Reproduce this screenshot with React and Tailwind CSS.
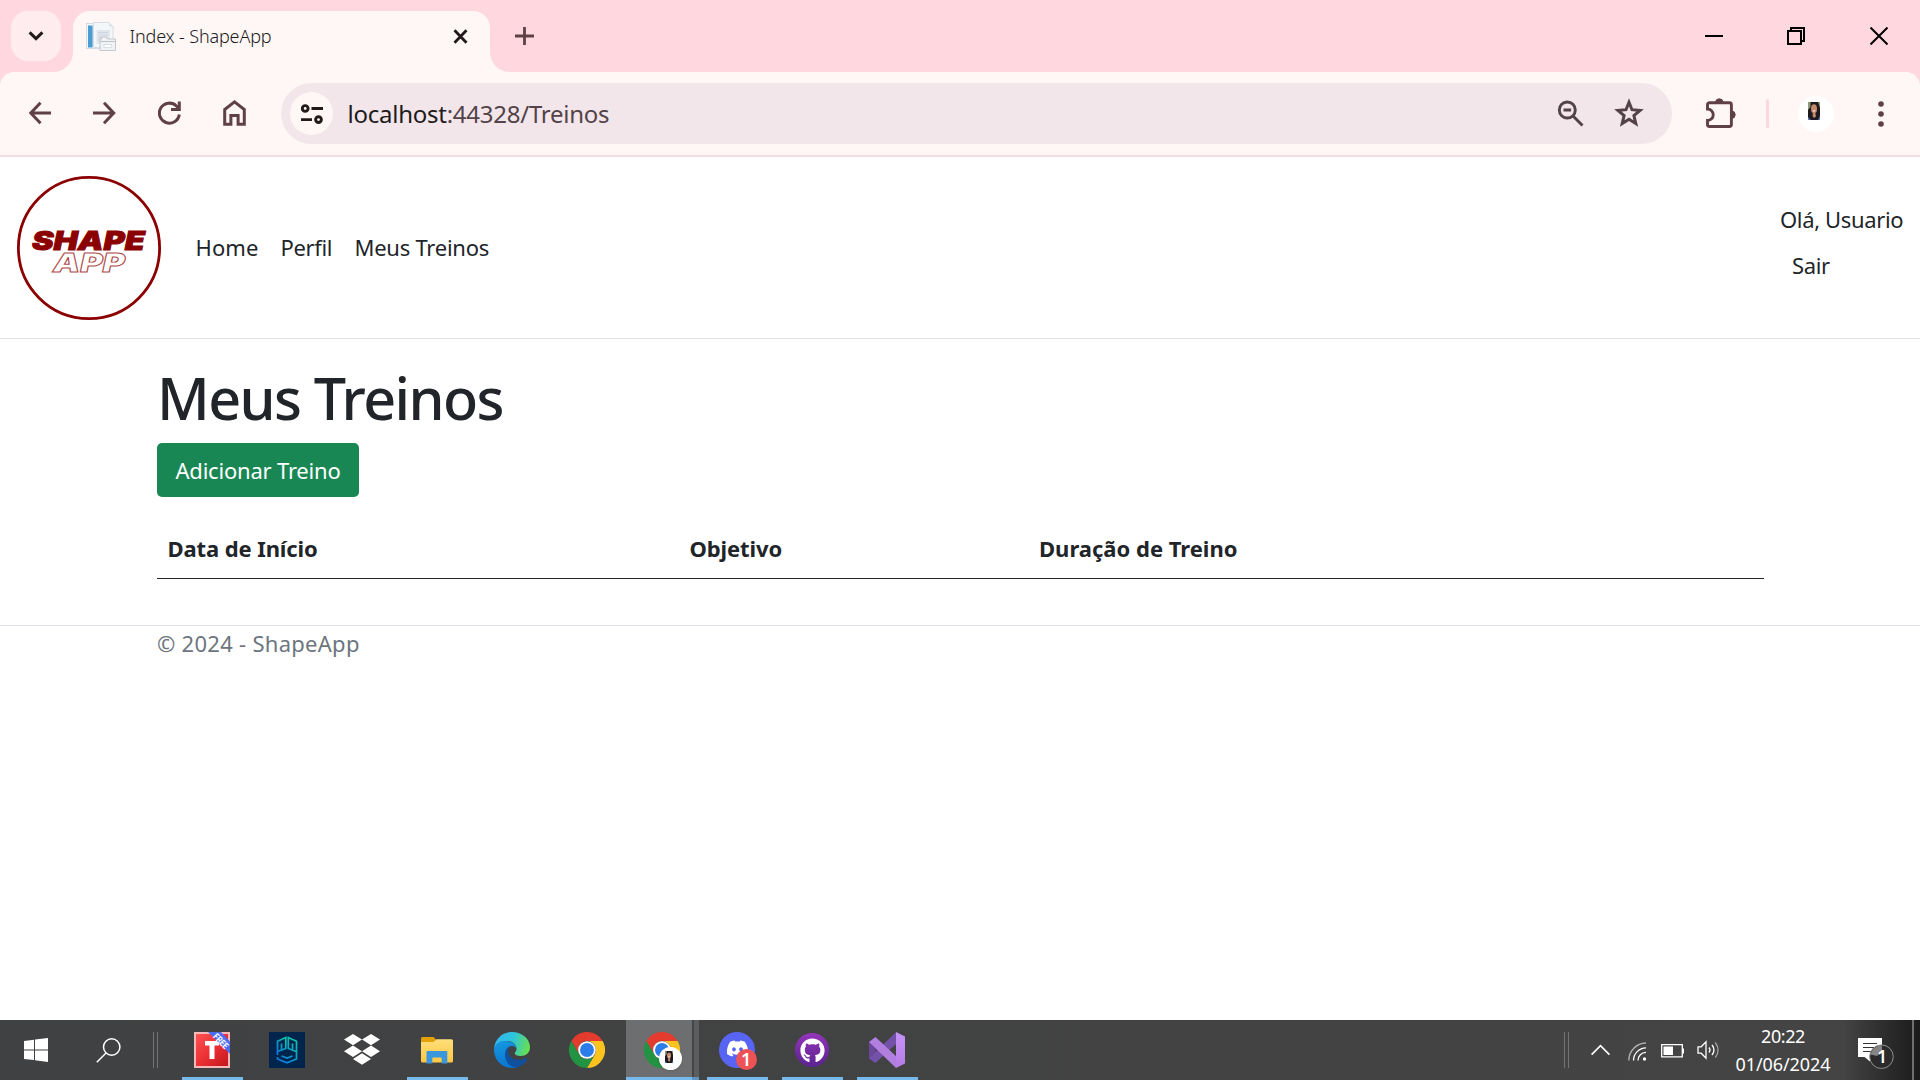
import React from "react";
import { FaGithub, FaDiscord } from "react-icons/fa";

/* ---------- browser chrome ---------- */

function Favicon() {
  return (
    <svg width="30" height="29" viewBox="0 0 30 29">
      <rect x="0.5" y="1.5" width="18" height="25" fill="#f2f6fa" stroke="#cdd5dc" strokeWidth="0.8" />
      <rect x="2" y="3.5" width="4.6" height="22" fill="#4a9cd3" />
      <path d="M7.5 0.5h15.5l4 4v21h-19.5z" fill="#f4f7fa" stroke="#cfd6dc" strokeWidth="0.8" />
      <path d="M23 0.5l0 4h4z" fill="#dbe2e8" />
      <rect x="10.5" y="8" width="13.5" height="14" fill="#e1e7ed" />
      <path d="M12 10.5h10M12 13h10M12 15.5h6M12 18h4" stroke="#c6d0da" strokeWidth="0.8" />
      <path d="M14 28.5v-11.5h1.5v-2h5l1 2h8v11.5z" fill="#f0f2f4" stroke="#bcc2c9" strokeWidth="0.9" />
      <path d="M14.5 19.5h15" stroke="#bcc2c9" strokeWidth="1" />
      <rect x="18" y="22.5" width="7.5" height="3" fill="#fff" stroke="#cfd5da" strokeWidth="0.7" />
    </svg>
  );
}

function TabStrip() {
  return (
    <div className="flex h-[72px] bg-[#ffd8df]">
      <div className="ml-[11px] mt-[11px] flex h-[50px] w-[50px] items-center justify-center rounded-[17px] bg-[#ffecef]">
        <svg width="16" height="10" viewBox="0 0 16 10" fill="none" stroke="#201a1b" strokeWidth="3">
          <path d="M1.6 1.4L8 7.6l6.400-6.200" />
        </svg>
      </div>
      <div className="relative ml-[11.500px] mt-[11px] flex h-[61px] w-[417.500px] rounded-t-[17px] bg-[#fff7f5]">
        <svg className="absolute bottom-0 -left-5" width="20" height="20" viewBox="0 0 20 20" fill="#fff7f5">
          <path d="M20 0v20H0A20 20 0 0 0 20 0z" />
        </svg>
        <svg className="absolute bottom-0 -right-5" width="20" height="20" viewBox="0 0 20 20" fill="#fff7f5">
          <path d="M0 0v20h20A20 20 0 0 1 0 0z" />
        </svg>
        <div className="ml-[13px] mt-[11px]"><Favicon /></div>
        <span className="ml-[14px] mt-[12px] whitespace-nowrap text-[18px] leading-[26px] font-light tracking-[-0.15px] text-[#201a1b]">
          Index - ShapeApp
        </span>
        <svg className="mt-[18px] mr-[22px] ml-auto" width="15" height="15" viewBox="0 0 15 15" fill="none" stroke="#201a1b" strokeWidth="2.8">
          <path d="M1.500 1.200l12 12.600M13.500 1.200l-12 12.600" />
        </svg>
      </div>
      <svg className="mt-[27px] ml-[25px]" width="19" height="18" viewBox="0 0 19 18" fill="none" stroke="#5f4046" strokeWidth="2.800">
        <path d="M9.500 0v18M0 9h19" />
      </svg>
      <div className="mt-[27px] mr-8 ml-auto flex gap-16">
        <svg width="18" height="18" viewBox="0 0 18 18"><path d="M0 8h18v2H0z" /></svg>
        <svg width="18" height="18" viewBox="0 0 18 18" fill="none" stroke="#000" strokeWidth="2" className="mr-[1px]">
          <path d="M1 4h13v13H1zM4 4V1h13v13h-3" />
        </svg>
        <svg width="18" height="18" viewBox="0 0 18 18" fill="none" stroke="#000" strokeWidth="2">
          <path d="M0.500 0.500l17 17M17.500 0.500l-17 17" />
        </svg>
      </div>
    </div>
  );
}

const nav = { fill: "none", stroke: "#5f4046", strokeWidth: 3 };

function Portrait({ className }) {
  return (
    <svg className={className} viewBox="0 0 12 18">
      <rect width="12" height="18" fill="#1f1a1d" />
      <path d="M0 0h2.500v5L0 8zM12 0H10l2 6z" fill="#8b9a78" />
      <ellipse cx="6" cy="6.800" rx="3" ry="4.600" fill="#c48a6e" />
      <path d="M4.400 8.400h3.200L6 10z" fill="#fff" />
      <path d="M5 10.500h2.200l0.800 4L6 16l-1.500-2z" fill="#c48b70" />
      <path d="M0 15l3 3H0zM12 14l-2 4h2z" fill="#5b76b0" />
    </svg>
  );
}

function Toolbar() {
  return (
    <div className="bg-[#ffd8df]">
      <div className="flex h-[85px] items-center rounded-t-[14px] border-b-2 border-[#f3dde0] bg-[#fff7f5]">
        <div className="ml-[28px] flex gap-[42px]">
          <svg width="23" height="24" viewBox="-1 0 23 24" {...nav}><path d="M11.500 1.800L1.800 12l9.700 10.200M2 12H22" /></svg>
          <svg width="23" height="24" viewBox="0 0 23 24" {...nav}><path d="M11 1.800L20.700 12 11 22.200M0 12H20.500" /></svg>
          <svg width="23" height="24" viewBox="0 0 23 24" {...nav}>
            <path d="M21.300 13.500A10 10 0 1 1 18.400 5L21 7.500" />
            <path d="M21.300 0.500V8.500H13" />
          </svg>
          <svg width="23" height="26" viewBox="0 0 23 26" className="-mt-[1px]" {...nav}>
            <path d="M1.700 24.300V9.500L11.500 1.900l9.800 7.600v14.800h-6.200v-8.800H7.900v8.800z" />
          </svg>
        </div>
        <div className="ml-[35px] flex h-[61px] w-[1391px] items-center rounded-full bg-[#f2e6ea]">
          <div className="ml-[9px] flex h-[43px] w-[43px] items-center justify-center rounded-full bg-[#fff7f5]">
            <svg width="22" height="20" viewBox="0 0 22 20" fill="none" stroke="#201a1b" strokeWidth="2.900">
              <circle cx="4.200" cy="4.500" r="2.900" /><path d="M10.500 4.500H22M0 15.600H11" /><circle cx="17.500" cy="15.600" r="2.900" />
            </svg>
          </div>
          <span className="ml-[14.500px] whitespace-nowrap text-[24px] leading-[34px] tracking-[-0.250px] text-[#534348]">
            <span className="text-[#201a1b]">localhost</span>:44328/Treinos
          </span>
          <svg className="mr-[1px] ml-auto" width="27" height="27" viewBox="0 0 27 27" fill="none" stroke="#534348" strokeWidth="2.900">
            <circle cx="10.300" cy="10" r="8" /><path d="M16 16l9.500 9.500M6.500 10h7.600" />
          </svg>
          <svg className="mt-[-2px] mr-[28px] ml-[29px]" width="30" height="29" viewBox="0 0 30 29" fill="none" stroke="#534348" strokeWidth="3">
            <path d="M15 4.200l3 7.500 8.100 0.700-6.200 5.200 1.900 8-6.800-4.300-6.800 4.300 1.900-8-6.200-5.200 8.100-0.700z" />
          </svg>
        </div>
        <svg className="-mt-[3px] ml-[34px]" width="31" height="31" viewBox="0 0 31 31">
          <path d="M3.500 5.800H23.400a2 2 0 0 1 2 2V27.500a2 2 0 0 1-2 2H3.500a2 2 0 0 1-2-2V23.500A5.600 5.600 0 0 0 1.500 12V7.800a2 2 0 0 1 2-2z" fill="none" stroke="#5f4046" strokeWidth="2.900" />
          <path d="M9.600 5.500a3.700 3.700 0 0 1 7.400 0zM25.500 14a3.700 3.700 0 0 1 0 7.400z" fill="#5f4046" stroke="#5f4046" />
        </svg>
        <div className="ml-[29px] h-[29px] w-[3px] rounded-full bg-[#ffd8df]" />
        <div className="ml-[29px] flex h-9 w-9 justify-center rounded-full bg-white">
          <Portrait className="mt-[6px] mr-1 h-[18px] w-3" />
        </div>
        <svg className="ml-[44px]" width="6" height="26" viewBox="0 0 6 26" fill="#5f4046">
          <circle cx="3" cy="3" r="2.800" /><circle cx="3" cy="13" r="2.800" /><circle cx="3" cy="23" r="2.800" />
        </svg>
      </div>
    </div>
  );
}

/* ---------- page ---------- */

function Logo() {
  return (
    <svg width="144" height="144" viewBox="0 0 144 144">
      <circle cx="72" cy="72" r="70.600" fill="#fff" stroke="#8b0000" strokeWidth="2.800" />
      <g fontFamily="Inter, sans-serif" fontStyle="italic" fontWeight="900" fontSize="25.500">
        <text x="15" y="73.500" textLength="113" lengthAdjust="spacingAndGlyphs" fill="#8b0000" stroke="#8b0000" strokeWidth="0.900">SHAPE</text>
        <text x="36" y="96" textLength="72" lengthAdjust="spacingAndGlyphs" fill="#fff" stroke="#b04a4a" strokeWidth="0.900">APP</text>
      </g>
    </svg>
  );
}

function Navbar() {
  return (
    <header className="flex h-[182px] items-center border-b border-[#dee2e6] text-[22px] leading-[46px]">
      <div className="ml-[17px]"><Logo /></div>
      <nav className="-mt-[2px] ml-[34.500px] flex whitespace-nowrap">
        <a className="w-[85px] tracking-[0.1px]">Home</a>
        <a className="w-[74px] tracking-[-0.35px]">Perfil</a>
        <a className="tracking-[-0.25px]">Meus Treinos</a>
      </nav>
      <div className="-mt-[12px] ml-auto mr-[16px] w-[124px] whitespace-nowrap tracking-[-0.35px]">
        <div>Olá, Usuario</div>
        <div className="pl-[12px]">Sair</div>
      </div>
    </header>
  );
}

function Page() {
  return (
    <main className="pt-[25px]">
      <div className="ml-[157px] w-[1607px]">
        <h1 className="whitespace-nowrap text-[57.500px] leading-[69px] font-medium tracking-[-1.600px]">Meus Treinos</h1>
        <button className="mt-[10px] block h-[54px] w-[202px] whitespace-nowrap rounded-[5px] bg-[#198754] text-[22px] leading-[54px] tracking-[-0.2px] text-white">
          Adicionar Treino
        </button>
        <div className="mt-[22px] grid h-[60px] grid-cols-[522px_349px_1fr] items-center whitespace-nowrap border-b border-[#212529] text-[22px] font-bold">
          <div className="pl-[10.500px] tracking-[-0.1px]">Data de Início</div>
          <div className="pl-[10.500px] tracking-[-0.1px]">Objetivo</div>
          <div className="pl-[11px]">Duração de Treino</div>
        </div>
      </div>
      <footer className="mt-[46px] border-t border-[#dee2e6]">
        <p className="ml-[157px] text-[22px] leading-[35px] tracking-[0.280px] text-[#6c757d]">© 2024 - ShapeApp</p>
      </footer>
    </main>
  );
}

/* ---------- taskbar ---------- */

function ChromeIcon() {
  return (
    <svg width="36" height="36" viewBox="0 0 48 48">
      <path d="M24 12H44.800A24 24 0 0 0 3.200 12L13.600 30A12 12 0 0 1 24 12z" fill="#e33b2e" />
      <path d="M44.800 12A24 24 0 0 1 24 48L34.400 30A12 12 0 0 0 24 12z" fill="#fcc31e" />
      <path d="M24 48A24 24 0 0 1 3.200 12L13.600 30A12 12 0 0 0 34.400 30z" fill="#229342" />
      <circle cx="24" cy="24" r="11.800" fill="#fff" />
      <circle cx="24" cy="24" r="9.300" fill="#2b7de9" />
    </svg>
  );
}

function TranslatorIcon() {
  return (
    <svg width="36" height="36" viewBox="0 0 36 36">
      <defs>
        <linearGradient id="tr" x1="0" y1="0" x2="1" y2="1"><stop offset="0" stopColor="#ff5252" /><stop offset="0.500" stopColor="#ea3035" /><stop offset="1" stopColor="#c4161c" /></linearGradient>
        <clipPath id="trc"><rect width="36" height="36" /></clipPath>
      </defs>
      <rect width="36" height="36" fill="#f6b9b9" />
      <rect x="2" y="2" width="32" height="32" fill="url(#tr)" />
      <path d="M11 9h14v4.500h-4.500V27h-5V13.500H11z" fill="#fff" />
      <g clipPath="url(#trc)">
        <path d="M14 0h13L36 9.500V22z" fill="#4a6df5" />
        <text x="18.500" y="5" transform="rotate(46 18.500 5)" fill="#fff" fontFamily="Roboto, sans-serif" fontWeight="700" fontSize="9" textLength="17.500" lengthAdjust="spacingAndGlyphs">FREE</text>
      </g>
    </svg>
  );
}

function PgIcon() {
  return (
    <svg width="36" height="36" viewBox="0 0 36 36">
      <defs><linearGradient id="pg" x1="0.800" y1="0" x2="0.200" y2="1"><stop offset="0" stopColor="#10c4a5" /><stop offset="1" stopColor="#0a7be6" /></linearGradient></defs>
      <rect width="36" height="36" fill="#00254d" />
      <g fill="none" stroke="url(#pg)" strokeWidth="1.700">
        <path d="M8.500 23V9.300L16.800 5.500V16.500L8.500 19.500M12.500 17.500V11.500" />
        <path d="M8.500 25v2L18 30.800l9.500-3.800V9.300L19.300 5.500V16.500L27 19.500M23.500 17.500V11.500M12.500 24l5.500 2 5.500-2" />
      </g>
    </svg>
  );
}

function DropboxIcon() {
  return (
    <svg width="36" height="36" viewBox="0 0 36 36" fill="#fff">
      <path d="M9 2l9 5.600-9 5.700-9-5.700zM27 2l9 5.600-9 5.700-9-5.700zM9 13.600l9 5.600-9 5.700-9-5.700zM27 13.600l9 5.600-9 5.700-9-5.700zM18 21.200l9 5.700-9 5.900-9-5.900z" />
    </svg>
  );
}

function ExplorerIcon() {
  return (
    <svg width="36" height="36" viewBox="0 0 36 36">
      <defs><linearGradient id="fo" x1="0" y1="0" x2="0" y2="1"><stop offset="0" stopColor="#ffde7a" /><stop offset="1" stopColor="#fdc842" /></linearGradient></defs>
      <path d="M2 6.500a1.500 1.500 0 0 1 1.500-1.500h11l2.500 2.500-2 4H2z" fill="#e3a008" />
      <path d="M2 10h12.500l3-2.800h15a1.500 1.500 0 0 1 1.500 1.500V29a1.500 1.500 0 0 1-1.500 1.500h-29A1.500 1.500 0 0 1 2 29z" fill="url(#fo)" />
      <path d="M7.500 31.500V20a1 1 0 0 1 1-1h18.800a1 1 0 0 1 1 1v11.500h-5.600V26.500a1 1 0 0 0-1-1h-7.400a1 1 0 0 0-1 1v5z" fill="#3a96dd" />
    </svg>
  );
}

function EdgeIcon() {
  return (
    <svg width="36" height="36" viewBox="0 0 256 256">
      <defs>
        <linearGradient id="e1" x1="0" y1="0.300" x2="1" y2="0.500"><stop offset="0" stopColor="#35b5f0" /><stop offset="0.500" stopColor="#2dc3dd" /><stop offset="1" stopColor="#66e04f" /></linearGradient>
        <linearGradient id="e2" x1="0.300" y1="0" x2="0.500" y2="1"><stop offset="0" stopColor="#1497e0" /><stop offset="1" stopColor="#0a75d0" /></linearGradient>
      </defs>
      <path d="M0 120C5 52 60 0 128 0c72 0 128 50 128 108 0 40-30 62-66 62-26 0-42-8-42-18 0-8 12-12 12-34 0-32-34-54-72-54C48 64 10 86 0 120z" fill="url(#e1)" />
      <path d="M0 128C0 88 38 64 80 64c46 0 80 24 80 56-8-16-22-22-38-20-26 4-40 30-36 62 5 48 44 78 82 91-12 3-26 3-40 3C57 256 0 199 0 128z" fill="url(#e2)" />
      <path d="M120 101c-20 12-24 34-16 56 16 40 70 52 118 30 8-4 18 2 12 10-18 30-44 50-78 57C108 250 78 206 78 164c0-34 18-58 42-63z" fill="#10519f" />
    </svg>
  );
}

function VisualStudioIcon() {
  return (
    <svg width="36" height="36" viewBox="0 0 36 36">
      <defs><linearGradient id="vs" x1="0" y1="0" x2="0" y2="1"><stop offset="0" stopColor="#c894f8" /><stop offset="1" stopColor="#b57be6" /></linearGradient></defs>
      <path d="M0 10L6.500 5V31L0 26.500z" fill="#5b3a8e" />
      <path d="M6.500 16.500v5.500L0 26.500V10z" fill="#6b479c" />
      <path d="M0 26.500L27 0v12L6.500 31z" fill="#7351a8" />
      <path d="M0 10L6.500 5 30 27l-3 9z" fill="#b07fe0" />
      <path d="M27 0l9 4.500v27L27 36z" fill="url(#vs)" />
    </svg>
  );
}

function GithubIcon() {
  return (
    <div className="flex h-9 w-9 items-center justify-center">
      <div className="flex h-[34px] w-[34px] items-center justify-center rounded-full bg-linear-to-b from-[#9634bb] to-[#5a2390]">
        <FaGithub size={25} color="#fff" />
      </div>
    </div>
  );
}

function DiscordIcon() {
  return (
    <div className="relative flex h-9 w-9 items-center justify-center rounded-full bg-[#5865f2]">
      <FaDiscord size={23} color="#fff" className="-mt-1" />
      <span className="absolute left-[17px] top-[17px] flex h-[20.500px] w-[20.500px] items-center justify-center rounded-full bg-[#ed5257] text-[18px] leading-none font-semibold text-white">1</span>
    </div>
  );
}

function ActiveChromeIcon() {
  return (
    <div className="relative">
      <ChromeIcon />
      <div className="absolute left-[15px] top-[15px] flex h-[23px] w-[23px] justify-center rounded-full bg-white shadow">
        <Portrait className="mt-1 mr-[3px] h-[12px] w-2" />
      </div>
    </div>
  );
}

function TaskbarApp({ open, active, children }) {
  return (
    <div className="relative flex h-full w-[75px] items-center pl-5">
      {active && (
        <div className="absolute inset-y-0 left-[2px] flex">
          <div className="w-[66px] bg-[#6d6e70]" />
          <div className="w-[2px] bg-[#444546]" />
          <div className="w-[5px] bg-[#5c5d5e]" />
        </div>
      )}
      {active && <div className="absolute bottom-0 left-[2px] flex h-[3px]"><div className="w-[66px] bg-[#76b9ed]" /><div className="w-[7px] bg-[#5e93bd]" /></div>}
      {open && <div className="absolute bottom-0 left-2 h-[3px] w-[61px] bg-[#76b9ed]" />}
      {children}
    </div>
  );
}

function Tray() {
  return (
    <div className="ml-auto flex h-full items-center text-white">
      <div className="mr-[22px] flex h-9 gap-[3px]"><i className="w-px bg-[#737373]" /><i className="w-px bg-[#737373]" /></div>
      <svg className="-mt-[1px]" width="19" height="12" viewBox="0 0 19 12" fill="none" stroke="#fff" strokeWidth="1.600"><path d="M0.600 10.600L9.500 1.600l8.900 9" /></svg>
      <svg className="ml-[18px] mt-[2px]" width="19" height="19" viewBox="0 0 19 19" fill="none" stroke="#fff" strokeWidth="1.300">
        <path d="M0.800 18.500A17.500 17.500 0 0 1 18 1" opacity="0.600" />
        <path d="M5.500 18.500A12.800 12.800 0 0 1 18 5.800M10 18.500A8.200 8.200 0 0 1 18 10.300" />
        <circle cx="16.500" cy="17" r="1.700" fill="#fff" stroke="none" />
      </svg>
      <svg className="ml-[14px] mt-[1px]" width="23" height="14" viewBox="0 0 23 14">
        <path d="M0.700 0.700h20.600v12.100H0.700z" fill="none" stroke="#fff" strokeWidth="1.300" />
        <path d="M2.500 2.500h9.500v8.500H2.500zM21.300 4.500H23v5h-1.700z" fill="#fff" />
      </svg>
      <svg className="ml-[13px]" width="23" height="20" viewBox="0 0 23 20" fill="none" stroke="#fff" strokeWidth="1.300">
        <path d="M1 6.800h3.200L9 1.800v16.400l-4.800-5H1z" />
        <path d="M12 7.500q2 2.500 0 5M15 5q4 5 0 10" /><path d="M18.300 2.500q5.500 7.500 0 15" opacity="0.500" />
      </svg>
      <div className="ml-[13px] w-[100px] whitespace-nowrap text-center text-[18px] leading-[28px]">
        <div className="tracking-[-0.400px]">20:22</div>
        <div className="tracking-[-0.100px]">01/06/2024</div>
      </div>
      <div className="relative ml-[25px] h-[36px] w-[37px]">
        <svg width="37" height="37" viewBox="0 0 37 37">
          <path d="M0 6h24v19H12v4.500L6.500 25H0z" fill="#fff" />
          <path d="M5 11.500h14M5 15.500h14M5 19.500h9" stroke="#333" strokeWidth="1.100" />
          <circle cx="23.500" cy="24.700" r="11.800" fill="#2b2b2b" stroke="#8f8f8f" />
          <path d="M12.500 22.500A11.500 11.500 0 0 1 24 13.500v6.500l-5 4z" fill="#858585" />
        </svg>
        <span className="absolute left-[12px] top-[13px] w-6 text-center text-[17px] leading-[23px] font-semibold">1</span>
      </div>
      <i className="ml-[17px] mr-[6px] h-full w-[2px] bg-[#6f6f6f]" />
    </div>
  );
}

function Taskbar() {
  return (
    <div className="flex h-[60px] items-center bg-linear-to-r from-[#404142] from-0% via-[#444444] via-96% to-[#1b1b1b]">
      <div className="flex w-[72px] justify-center">
        <svg width="24" height="24" viewBox="0 0 24 24" fill="#fff">
          <path d="M0 3l10-1.200v9.700H0zM11 1.600L24 0v11.500H11zM0 12.500h10v9.600L0 20.900zM11 12.500h13V24l-13-1.700z" />
        </svg>
      </div>
      <div className="flex w-[72px] justify-center">
        <svg width="25" height="25" viewBox="0 0 25 25" fill="none" stroke="#fff" strokeWidth="1.500">
          <circle cx="15.700" cy="9" r="8.200" /><path d="M10 15L0.800 24.200" />
        </svg>
      </div>
      <div className="ml-[9px] mr-[16px] flex h-9 gap-[3px]"><i className="w-px bg-[#737373]" /><i className="w-px bg-[#737373]" /></div>
      <TaskbarApp open><TranslatorIcon /></TaskbarApp>
      <TaskbarApp><PgIcon /></TaskbarApp>
      <TaskbarApp><DropboxIcon /></TaskbarApp>
      <TaskbarApp open><ExplorerIcon /></TaskbarApp>
      <TaskbarApp><EdgeIcon /></TaskbarApp>
      <TaskbarApp><ChromeIcon /></TaskbarApp>
      <TaskbarApp active><ActiveChromeIcon /></TaskbarApp>
      <TaskbarApp open><DiscordIcon /></TaskbarApp>
      <TaskbarApp open><GithubIcon /></TaskbarApp>
      <TaskbarApp open><VisualStudioIcon /></TaskbarApp>
      <Tray />
    </div>
  );
}

export default function App() {
  return (
    <div className="flex h-[1080px] w-[1920px] flex-col overflow-hidden bg-white font-['Noto_Sans','Open_Sans',sans-serif] text-[#212529]">
      <TabStrip />
      <Toolbar />
      <div className="flex-1">
        <Navbar />
        <Page />
      </div>
      <Taskbar />
    </div>
  );
}
